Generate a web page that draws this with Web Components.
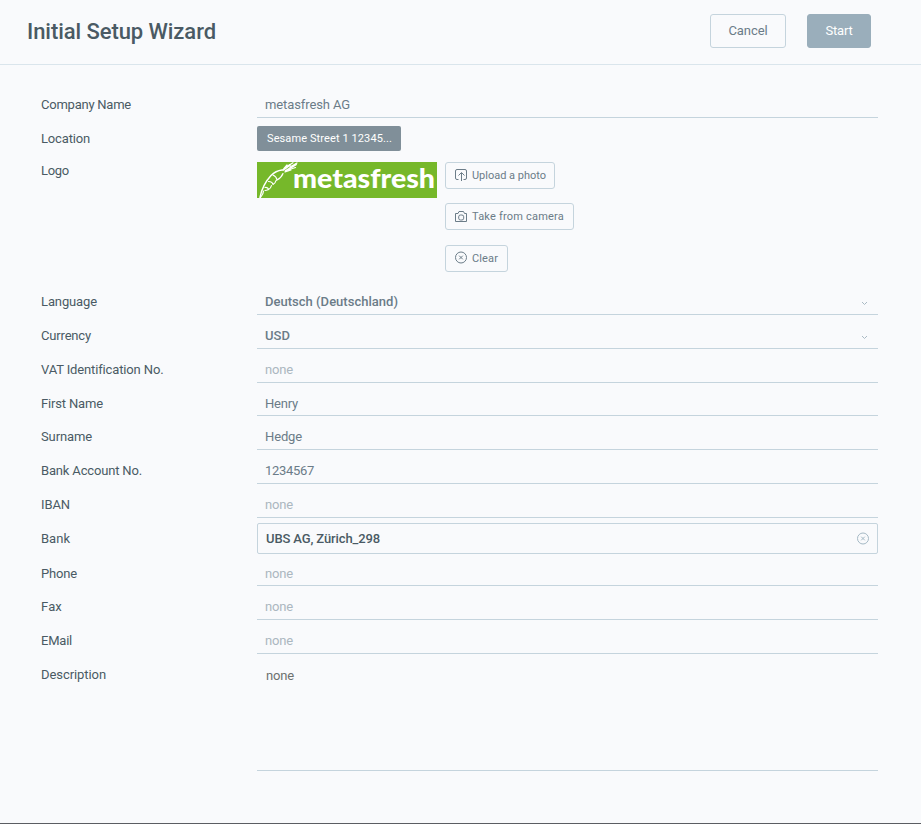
<!DOCTYPE html>
<html lang="en">
<head>
<meta charset="utf-8">
<title>Initial Setup Wizard</title>
<style>
html,body{margin:0;height:100%;overflow:hidden;background:#f9fafc}
body{font-family:Roboto,"Liberation Sans",sans-serif;font-size:13px;line-height:16px;color:#4a5a64}
</style>
</head>
<body>
<setup-wizard></setup-wizard>
<script>
const define = (name, html, setup) => {
  const t = document.createElement('template');
  t.innerHTML = html;
  customElements.define(name, class extends HTMLElement {
    connectedCallback() {
      if (this.shadowRoot) return;
      this.attachShadow({mode: 'open'}).append(t.content.cloneNode(true));
      if (setup) setup(this, this.shadowRoot);
    }
  });
};

/* A single line of text, tracked so that it fills the width given in "w". */
define('fit-text', `<style>:host{display:inline-block;white-space:nowrap}span{display:inline-block}</style><span><slot></slot></span>`,
  (host, root) => {
    const w = +host.getAttribute('w'), s = root.querySelector('span');
    if (!w) return;
    const n = host.textContent.length;
    s.style.letterSpacing = ((w - s.getBoundingClientRect().width) / n) + 'px';
  });

const icons = {
  upload: '<path d="M3.500 10.500H2Q.5 10.500 .5 9V2Q.5 .5 2 .5H10Q11.500 .5 11.500 2V9Q11.500 10.500 10 10.500H8.500M6.500 12V4M3.500 6.500L6.500 3.500L9.500 6.500"/>',
  camera: '<path d="M.5 3.500H3L4 1.500H8.500L9.500 3.500H11.500V11.500H.5Z"/><rect x="3.700" y="5" width="5" height="5" rx="1.800"/>',
  clear: '<circle cx="6" cy="5.500" r="5.500"/><path d="M4.200 3.700L7.800 7.300M7.800 3.700L4.200 7.300"/>',
  chevron: '<path d="M4 5L6.500 7.500L9 5"/>'
};
define('line-icon', `<style>:host{display:block;width:13px;height:13px;flex:none}svg{display:block;overflow:visible;fill:none;stroke:currentColor;stroke-width:1}</style><svg width="13" height="13" viewBox="0 0 13 13"></svg>`,
  (host, root) => root.querySelector('svg').innerHTML = icons[host.getAttribute('name')]);

define('wizard-button', `<style>
:host{display:flex;align-items:center;justify-content:center;box-sizing:border-box;height:34px;border:1px solid #c5d4dd;border-radius:3px;color:#6b7c88}
:host([primary]){background:#9aaebb;border-color:#9aaebb;color:#fff}
:host([small]){height:27px;font-size:11px;justify-content:flex-start;padding-left:9px;gap:4px}
</style><slot></slot>`);

define('form-row', `<style>
:host{display:grid;grid-template-columns:216px 621px;box-sizing:border-box;height:34px}
.label{padding-top:var(--label-top,13px)}
.field{min-width:0;display:flex}
</style><div class="label"><slot name="label"></slot></div><div class="field"><slot></slot></div>`);

define('text-field', `<style>
:host{display:flex;flex:1;justify-content:space-between;box-sizing:border-box;border-bottom:1px solid #c5d4dd;padding:var(--label-top,13px) 7px 0 8px;color:#6b7c88}
:host([empty]){color:#abb7c0}
:host([boxed]){margin:5px 0 0;height:31px;border:1px solid #c5d4dd;border-radius:2px;padding:7px 7px 0 8px;color:#4a5a64}
:host([area]){color:#6d716f;padding-left:9px}
</style><slot></slot>`);

define('brand-logo', `<style>:host{display:block;width:180px;height:36px}svg{display:block;background:#76b82a}</style>
<svg width="180" height="36" viewBox="0 0 180 36">
<g fill="none" stroke="#fff" stroke-linecap="round">
<path stroke-width="1.500" d="M3 35.500C4.500 27 8.500 19.500 14 13.500C17.500 10 21 8.500 25 8"/>
<path stroke-width="1.200" d="M3.500 35.500C5.500 33 6.500 31.500 6.500 29M8 25.500Q11 25 11.500 27.500Q9.500 28.500 8 28.500M11.500 27.500Q14 26 14.500 23.500M11.500 19.500Q15.500 19.500 16 22.500M16 22.500Q18.500 21 19 18.500M16 13Q19.500 14.500 20 18Q24.500 15.500 26 11.500"/>
<path stroke-width="1.900" d="M26 8L33 3M28.500 9L39 2.500"/>
<path stroke-width="1.200" d="M27 6.500L30 3M29 5L36 .8M31 8L38.500 5.500M28 10L34 8M33 5L40 1"/>
</g>
<text x="36" y="25.600" textLength="142" lengthAdjust="spacingAndGlyphs" fill="#fff" font-family="Lato,sans-serif" font-weight="900" font-size="26">metasfresh</text>
</svg>`);

define('setup-wizard', `<style>
:host{display:flex;flex-direction:column;height:824px;background:#f9fafc}
header{height:65px;box-sizing:border-box;border-bottom:1px solid #dae5ec;display:flex;align-items:flex-start;padding:14px 50px 0 27px}
h1{margin:4px auto 0 0;font-size:22px;line-height:28px;font-weight:500;color:#4a5a64}
.cancel{width:76px;margin-right:21px}.start{width:64px}
main{flex:1;padding:26px 0 0 41px}
.chip{align-self:flex-start;margin-top:8px;box-sizing:border-box;width:144px;height:25px;border-radius:2px;background:#808f99;color:#fff;font-size:11px;line-height:25px;padding-left:10px}
.actions{display:flex;flex-direction:column;align-items:flex-start;margin-left:8px}
.bold{font-weight:500}
.pale{color:#a5b9c5}
.arrow{color:#aabac4}
footer{height:1px;background:#5b5d62}
</style>
<header><h1><fit-text w="189">Initial Setup Wizard</fit-text></h1>
<wizard-button class="cancel"><fit-text w="39">Cancel</fit-text></wizard-button>
<wizard-button class="start" primary><fit-text w="27">Start</fit-text></wizard-button></header>
<main></main><footer></footer>`, (host, root) => {
  const none = {v: 'none', w: 28, attr: 'empty'};
  const arrow = '<line-icon class="arrow" name="chevron" style="margin-top:3px"></line-icon>';
  const field = f => `<text-field ${f.attr || ''}><fit-text class="${f.cls || ''}" w="${f.w}">${f.v}</fit-text>${f.icon || ''}</text-field>`;
  const chip = '<div class="chip"><fit-text w="125">Sesame Street 1 12345...</fit-text></div>';
  const act = (icon, text, w, width, gap) => `<wizard-button small style="width:${width}px;margin-bottom:${gap}px"><line-icon name="${icon}"></line-icon><fit-text w="${w}">${text}</fit-text></wizard-button>`;
  const logo = '<brand-logo style="margin-top:10px"></brand-logo><div class="actions" style="margin-top:10px">'
    + act('upload', 'Upload a photo', 74, 110, 14) + act('camera', 'Take from camera', 92, 129, 15) + act('clear', 'Clear', 26, 63, 0) + '</div>';
  const rows = [
    ['Company Name', 90, 27, 6, field({v: 'metasfresh AG', w: 85})],
    ['Location', 49, 34, 13, chip],
    ['Logo', 28, 129, 11, logo],
    ['Language', 56, 34, 13, field({v: 'Deutsch (Deutschland)', w: 133, cls: 'bold', icon: arrow})],
    ['Currency', 50, 34, 13, field({v: 'USD', w: 25, cls: 'bold', icon: arrow})],
    ['VAT Identification No.', 122, 34, 13, field(none)],
    ['First Name', 62, 33, 13, field({v: 'Henry', w: 33})],
    ['Surname', 51, 34, 13, field({v: 'Hedge', w: 37})],
    ['Bank Account No.', 101, 34, 13, field({v: '1234567', w: 49})],
    ['IBAN', 29, 34, 13, field(none)],
    ['Bank', 29, 36, 13, field({v: 'UBS AG, Zürich_298', w: 114, attr: 'boxed', cls: 'bold', icon: '<line-icon class="pale" name="clear" style="margin-top:2px"></line-icon>'})],
    ['Phone', 36, 32, 12, field(none)],
    ['Fax', 21, 34, 13, field(none)],
    ['EMail', 31, 34, 13, field(none)],
    ['Description', 65, 117, 13, field({v: 'none', w: 28, attr: 'area style="padding-top:14px"'})]
  ];
  root.querySelector('main').innerHTML = rows.map(([l, w, h, top, body]) =>
    `<form-row style="height:${h}px;--label-top:${top}px"><fit-text slot="label" w="${w}">${l}</fit-text>${body}</form-row>`).join('');
});
</script>
</body>
</html>
